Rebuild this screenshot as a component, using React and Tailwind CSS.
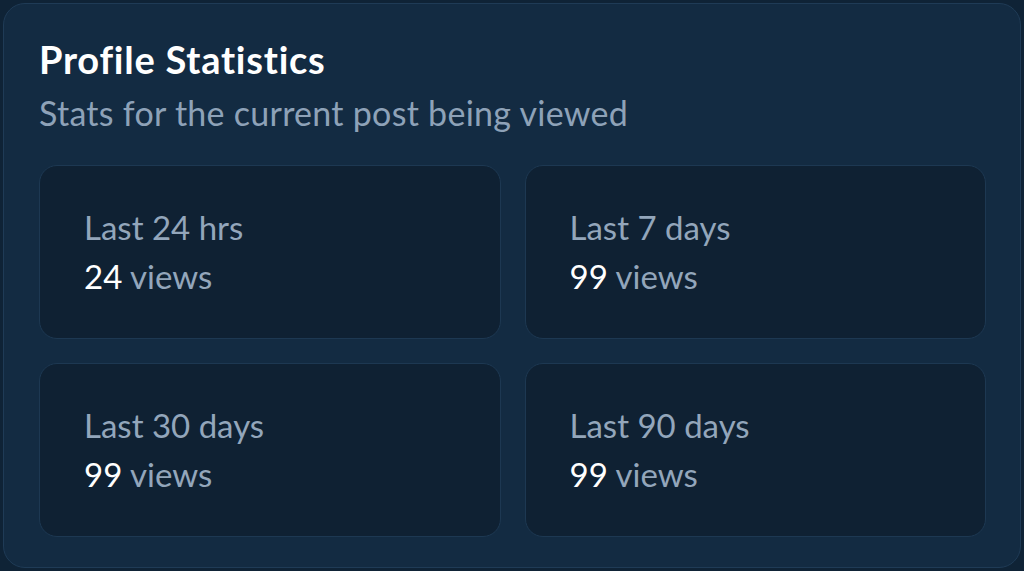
const stats = [
  { label: 'Last 24 hrs', count: 24 },
  { label: 'Last 7 days', count: 99 },
  { label: 'Last 30 days', count: 99 },
  { label: 'Last 90 days', count: 99 },
]

function StatCard({ label, count }) {
  return (
    <div className="h-[174px] flex flex-col justify-center px-[44px] bg-[#0f2133] border border-[#1d3852] rounded-[18px]">
      <p className="text-[33px] leading-[49px] text-[#93a6bb]">{label}</p>
      <p className="text-[33px] leading-[49px] text-[#93a6bb]">
        <span className="text-white">{count}</span> views
      </p>
    </div>
  )
}

export default function App() {
  return (
    <div
      className="w-[1024px] h-[571px] bg-[#0f2336] p-[3px] overflow-hidden [font-variant-ligatures:none]"
      style={{ fontFamily: 'Lato, "Open Sans", sans-serif' }}
    >
      <div className="h-[565px] bg-[#132b42] border border-[#1f3b56] rounded-[22px] pl-[35px] pr-[34px] pt-[31px]">
        <h1 className="text-[38px] leading-[48px] font-bold tracking-[0.02em] text-white">Profile Statistics</h1>
        <p className="text-[34px] leading-[60px] tracking-[0.008em] text-[#8ea2b8]">Stats for the current post being viewed</p>
        <div className="grid grid-cols-2 gap-6 mt-[22px]">
          {stats.map((s) => (
            <StatCard key={s.label} label={s.label} count={s.count} />
          ))}
        </div>
      </div>
    </div>
  )
}
